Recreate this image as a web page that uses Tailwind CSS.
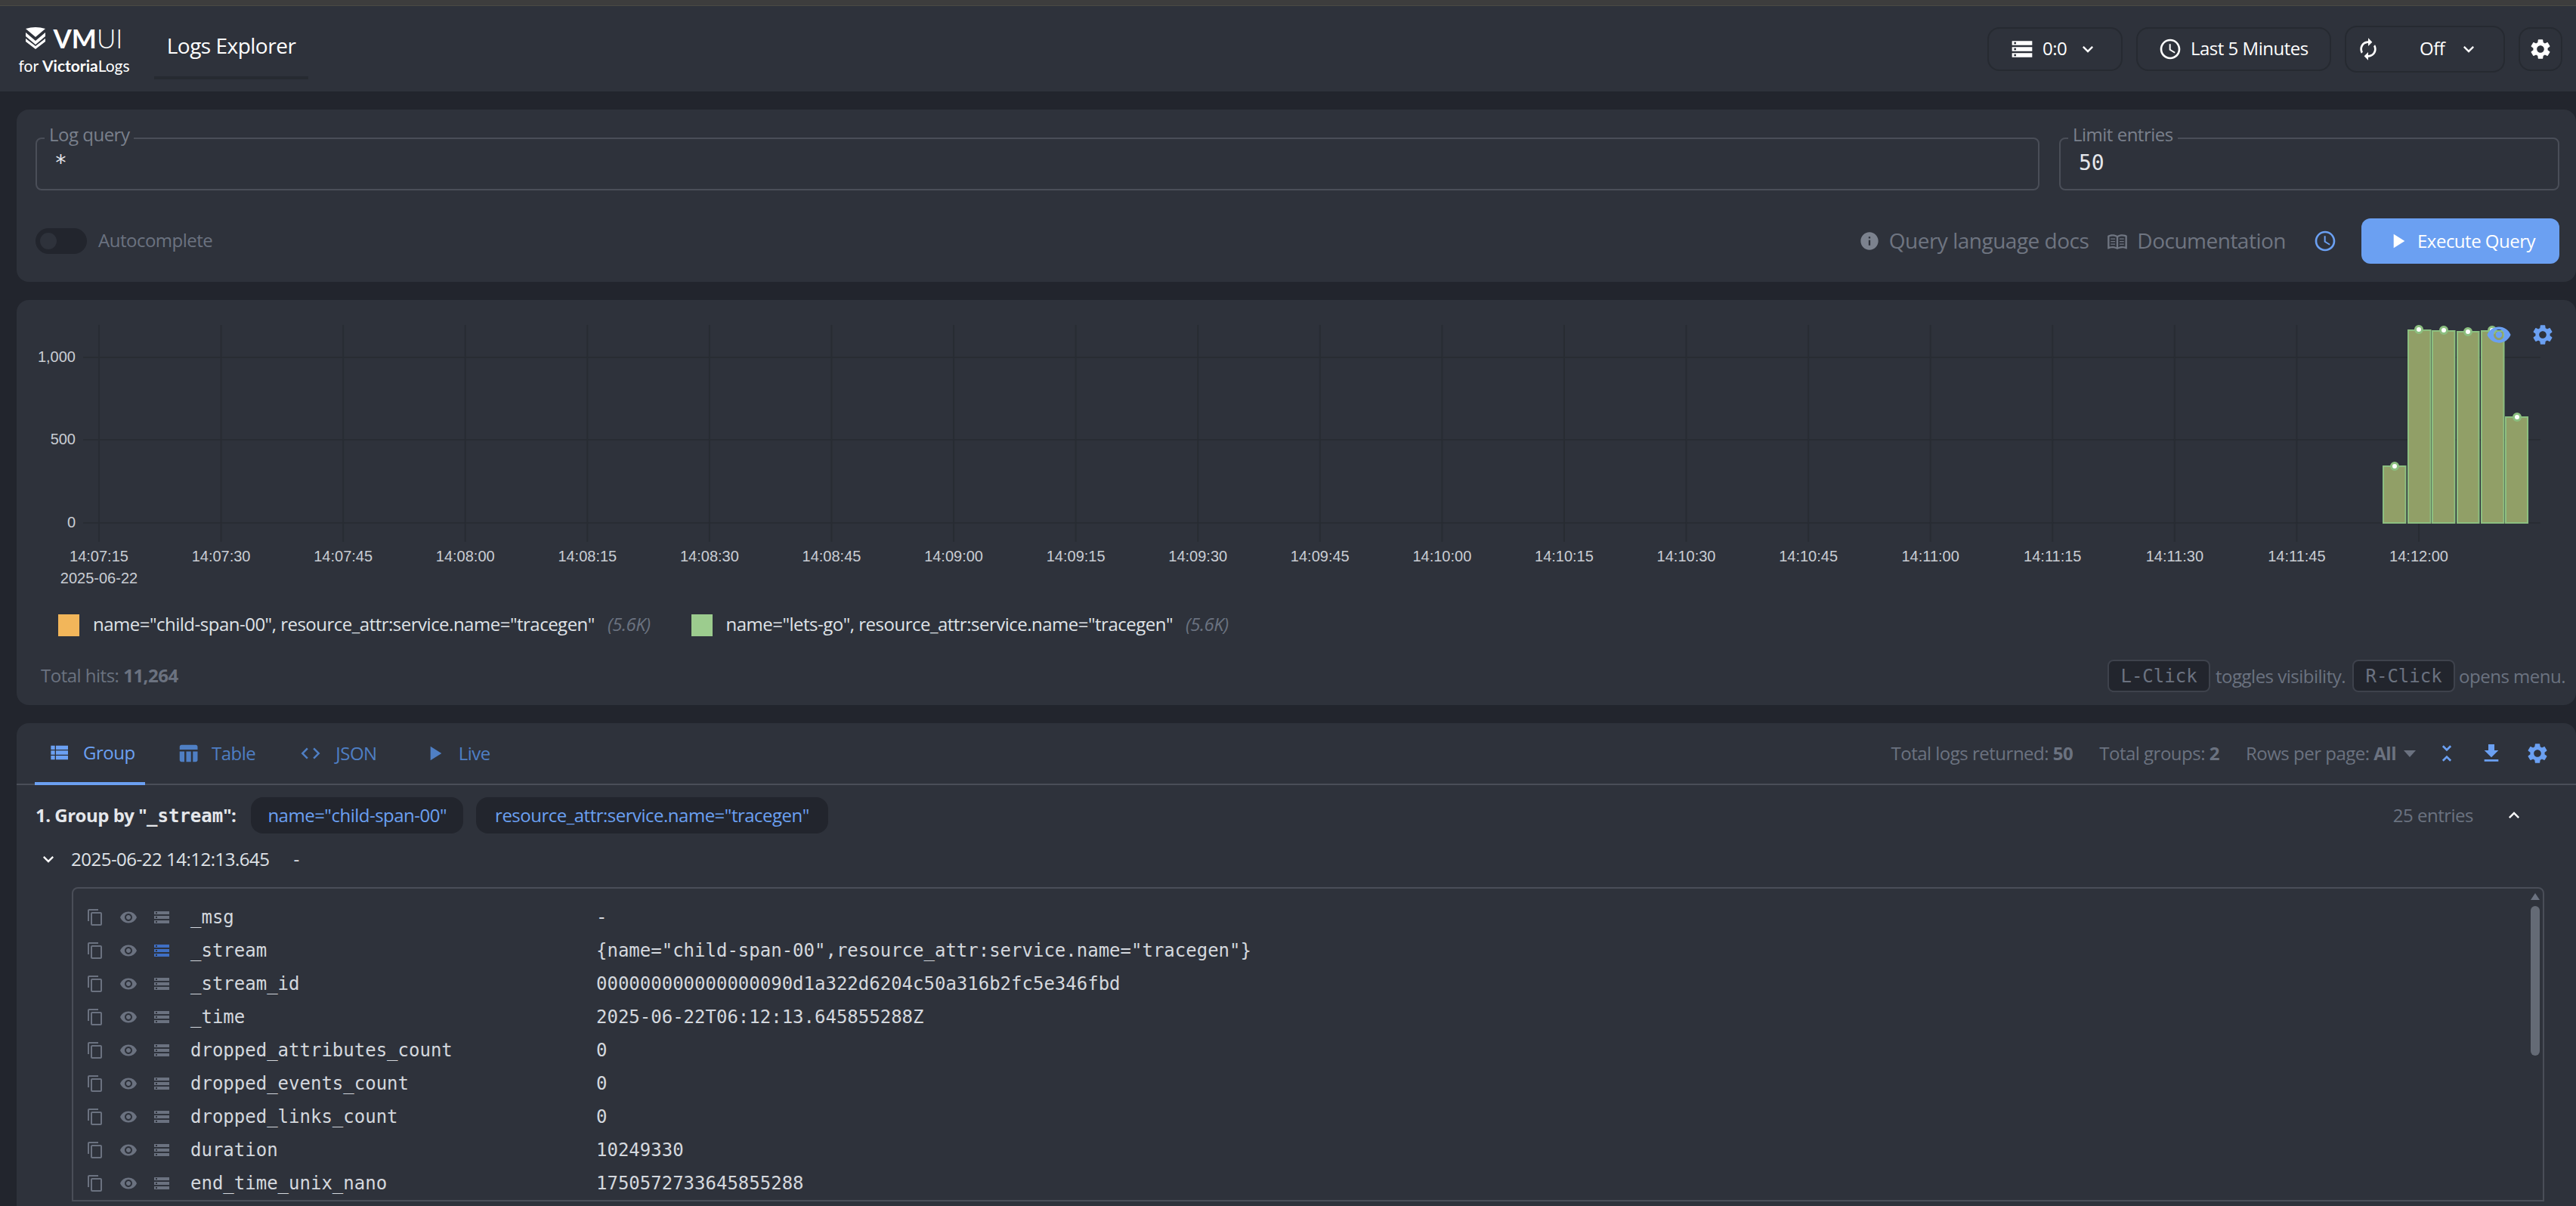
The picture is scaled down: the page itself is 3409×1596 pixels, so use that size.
<!DOCTYPE html>
<html lang="en">
<head>
  <meta charset="UTF-8" />
  <title>VMUI Logs Explorer</title>
  <script src="https://cdn.jsdelivr.net/npm/@tailwindcss/browser@4"></script>
</head>
<body class="bg-[#22252d] h-[1596px] overflow-hidden font-['Open_Sans',sans-serif] text-[24px] tracking-[-0.5px] text-white">
  <svg class="hidden">
    <symbol id="i-storage" viewBox="0 0 24 24"><path d="M2 20h20v-4H2v4zm2-3h2v2H4v-2zM2 4v4h20V4H2zm4 3H4V5h2v2zm-4 7h20v-4H2v4zm2-3h2v2H4v-2z"/></symbol>
    <symbol id="i-clock" viewBox="0 0 24 24"><path d="M11.99 2C6.47 2 2 6.48 2 12s4.47 10 9.99 10C17.52 22 22 17.52 22 12S17.52 2 11.99 2zM12 20c-4.42 0-8-3.58-8-8s3.58-8 8-8 8 3.58 8 8-3.58 8-8 8zm.5-13H11v6l5.25 3.15.75-1.23-4.5-2.67z"/></symbol>
    <symbol id="i-refresh" viewBox="0 0 24 24"><path d="M12 6v3l4-4-4-4v3c-4.42 0-8 3.58-8 8 0 1.57.46 3.03 1.24 4.26L6.7 14.8c-.45-.83-.7-1.79-.7-2.8 0-3.31 2.69-6 6-6zm6.76 1.74L17.3 9.2c.44.84.7 1.79.7 2.8 0 3.31-2.69 6-6 6v-3l-4 4 4 4v-3c4.42 0 8-3.58 8-8 0-1.57-.46-3.03-1.24-4.26z"/></symbol>
    <symbol id="i-gear" viewBox="0 0 24 24"><path d="M19.14 12.94c.04-.3.06-.61.06-.94 0-.32-.02-.64-.07-.94l2.03-1.58c.18-.14.23-.41.12-.61l-1.92-3.32c-.12-.22-.37-.29-.59-.22l-2.39.96c-.5-.38-1.03-.7-1.62-.94l-.36-2.54c-.04-.24-.24-.41-.48-.41h-3.84c-.24 0-.43.17-.47.41l-.36 2.54c-.59.24-1.13.57-1.62.94l-2.39-.96c-.22-.08-.47 0-.59.22L2.74 8.87c-.12.21-.08.47.12.61l2.03 1.58c-.05.3-.09.63-.09.94s.02.64.07.94l-2.03 1.58c-.18.14-.23.41-.12.61l1.92 3.32c.12.22.37.29.59.22l2.39-.96c.5.38 1.03.7 1.62.94l.36 2.54c.05.24.24.41.48.41h3.84c.24 0 .44-.17.47-.41l.36-2.54c.59-.24 1.13-.56 1.62-.94l2.39.96c.22.08.47 0 .59-.22l1.92-3.32c.12-.22.07-.47-.12-.61l-2.01-1.58zM12 15.6c-1.98 0-3.6-1.62-3.6-3.6s1.62-3.6 3.6-3.6 3.6 1.62 3.6 3.6-1.62 3.6-3.6 3.6z"/></symbol>
    <symbol id="i-down" viewBox="0 0 24 24"><path d="M7.41 8.59 12 13.17l4.59-4.58L18 10l-6 6-6-6 1.41-1.41z"/></symbol>
    <symbol id="i-up" viewBox="0 0 24 24"><path d="M7.41 15.41 12 10.83l4.59 4.58L18 14l-6-6-6 6 1.41 1.41z"/></symbol>
    <symbol id="i-info" viewBox="0 0 24 24"><path d="M12 2C6.48 2 2 6.48 2 12s4.48 10 10 10 10-4.48 10-10S17.52 2 12 2zm1 15h-2v-6h2v6zm0-8h-2V7h2v2z"/></symbol>
    <symbol id="i-book" viewBox="0 0 24 24"><path d="M21 5c-1.11-.35-2.33-.5-3.5-.5-1.95 0-4.05.4-5.5 1.5-1.45-1.1-3.55-1.5-5.5-1.5S2.45 4.9 1 6v14.65c0 .25.25.5.5.5.1 0 .15-.05.25-.05C3.1 20.45 5.05 20 6.5 20c1.95 0 4.05.4 5.5 1.5 1.35-.85 3.8-1.5 5.5-1.5 1.65 0 3.35.3 4.75 1.05.1.05.15.05.25.05.25 0 .5-.25.5-.5V6c-.6-.45-1.25-.75-2-1zM3 18.5V7c1.1-.35 2.3-.5 3.5-.5 1.34 0 3.13.41 4.5 .99v11.5c-1.37-.58-3.16-.99-4.5-.99-1.2 0-2.4.15-3.5.5zm18 0c-1.1-.35-2.3-.5-3.5-.5-1.34 0-3.13.41-4.5.99V7.49c1.37-.58 3.16-.99 4.5-.99 1.2 0 2.4.15 3.5.5v11.5z"/><path d="M4.5 9h5v1h-5zm0 3h5v1h-5zm0 3h5v1h-5zm10-6h5v1h-5zm0 3h5v1h-5zm0 3h5v1h-5z"/></symbol>
    <symbol id="i-play" viewBox="0 0 24 24"><path d="M8 5v14l11-7z"/></symbol>
    <symbol id="i-list" viewBox="0 0 24 24"><path d="M4 14h4v-4H4v4zm0 5h4v-4H4v4zM4 9h4V5H4v4zm5 5h12v-4H9v4zm0 5h12v-4H9v4zM9 5v4h12V5H9z"/></symbol>
    <symbol id="i-table" viewBox="0 0 24 24"><path d="M10 10.02h5V21h-5zM17 21h3c1.1 0 2-.9 2-2v-9h-5v11zm3-18H5c-1.1 0-2 .9-2 2v3h19V5c0-1.1-.9-2-2-2zM3 19c0 1.1.9 2 2 2h3V10H3v9z"/></symbol>
    <symbol id="i-code" viewBox="0 0 24 24"><path d="M9.4 16.6 4.8 12l4.6-4.6L8 6l-6 6 6 6 1.4-1.4zm5.2 0 4.6-4.6-4.6-4.6L16 6l6 6-6 6-1.4-1.4z"/></symbol>
    <symbol id="i-collapse" viewBox="0 0 24 24"><path d="M7.41 18.59 8.83 20 12 16.83 15.17 20l1.41-1.41L12 14l-4.59 4.59zm9.18-13.18L15.17 4 12 7.17 8.83 4 7.41 5.41 12 10l4.59-4.59z"/></symbol>
    <symbol id="i-download" viewBox="0 0 24 24"><path d="M19 9h-4V3H9v6H5l7 7 7-7zM5 18v2h14v-2H5z"/></symbol>
    <symbol id="i-copy" viewBox="0 0 24 24"><path d="M16 1H4c-1.1 0-2 .9-2 2v14h2V3h12V1zm3 4H8c-1.1 0-2 .9-2 2v14c0 1.1.9 2 2 2h11c1.1 0 2-.9 2-2V7c0-1.1-.9-2-2-2zm0 16H8V7h11v14z"/></symbol>
    <symbol id="i-eye" viewBox="0 0 24 24"><path d="M12 4.5C7 4.5 2.73 7.61 1 12c1.73 4.39 6 7.5 11 7.5s9.27-3.11 11-7.5c-1.73-4.39-6-7.5-11-7.5zM12 17c-2.76 0-5-2.24-5-5s2.24-5 5-5 5 2.24 5 5-2.24 5-5 5zm0-8c-1.66 0-3 1.34-3 3s1.34 3 3 3 3-1.34 3-3-1.34-3-3-3z"/></symbol>
  </svg>

  <!-- top strip -->
  <div class="h-[8px] bg-[#3d3d3d] border-b border-[#4a4a44]"></div>

  <!-- header -->
  <header class="h-[113px] bg-[#2e323b] flex items-center justify-between pl-[23px] pr-[18px]">
    <div class="flex items-center">
      <div class="w-[150px] flex flex-col items-center font-['Lato',sans-serif] tracking-normal">
        <div class="flex items-center gap-[10px] h-[36px]">
          <svg class="w-[27px] h-[30px] fill-white" viewBox="0 0 27 30">
            <path d="M0 3 Q13 -1 26 3 L13 14 Z"/>
            <path d="M0 8 L13 19 L26 8 V13 L13 24 L0 13 Z"/>
            <path d="M0 16 L13 26 L26 16 V20 L13 30 L0 20 Z"/>
          </svg>
          <span class="text-[35px] leading-none font-bold">VM<span class="font-light">UI</span></span>
        </div>
        <div class="text-[21px] leading-none mt-[8px] whitespace-nowrap">for <span class="font-bold">Victoria</span>Logs</div>
      </div>
      <div class="ml-[31px] w-[204px] h-[113px] pt-[31px] relative text-center text-[28px]">
        Logs Explorer
        <div class="absolute left-0 right-0 top-[93px] h-[4px] bg-[#262a31]"></div>
      </div>
    </div>
    <div class="flex items-center gap-[18px]">
      <div class="w-[179px] h-[58px] border-2 border-[#262a31] rounded-[16px] flex items-center pl-[28px]">
        <svg class="w-[32px] h-[32px] fill-white"><use href="#i-storage"/></svg>
        <span class="ml-[11px] -mt-[2px]">0:0</span>
        <svg class="w-[28px] h-[28px] fill-white ml-[14px]"><use href="#i-down"/></svg>
      </div>
      <div class="w-[258px] h-[58px] border-2 border-[#262a31] rounded-[16px] flex items-center pl-[27px]">
        <svg class="w-[32px] h-[32px] fill-white"><use href="#i-clock"/></svg>
        <span class="ml-[11px] -mt-[2px]">Last 5 Minutes</span>
      </div>
      <div class="w-[212px] h-[62px] border-2 border-[#262a31] rounded-[16px] flex items-center pl-[13px]">
        <svg class="w-[32px] h-[32px] fill-white"><use href="#i-refresh"/></svg>
        <span class="ml-[52px] -mt-[2px]">Off</span>
        <svg class="w-[28px] h-[28px] fill-white ml-[18px]"><use href="#i-down"/></svg>
      </div>
      <div class="w-[58px] h-[58px] border-2 border-[#262a31] rounded-[16px] flex items-center justify-center">
        <svg class="w-[32px] h-[32px] fill-white"><use href="#i-gear"/></svg>
      </div>
    </div>
  </header>

  <main class="pl-[22px] pt-[24px] flex flex-col gap-[24px]">
    <!-- query card -->
    <section class="h-[228px] bg-[#2e323b] rounded-[16px] pt-[37px] pl-[25px] pr-[22px]">
      <div class="flex gap-[26px]">
        <div class="relative flex-1 h-[70px] border-2 border-[#4a4e58] rounded-[8px]">
          <span class="absolute left-[10px] -top-[22px] px-[6px] bg-[#2e323b] text-[#7a808c] leading-[32px]">Log query</span>
          <span class="absolute left-[23px] top-[14px] font-['DejaVu_Sans_Mono',monospace] tracking-normal text-[28px] leading-[36px] text-[#e5e7eb]">*</span>
        </div>
        <div class="relative w-[662px] h-[70px] border-2 border-[#4a4e58] rounded-[8px]">
          <span class="absolute left-[10px] -top-[22px] px-[6px] bg-[#2e323b] text-[#7a808c] leading-[32px]">Limit entries</span>
          <span class="absolute left-[24px] top-[14px] font-['DejaVu_Sans_Mono',monospace] tracking-normal text-[28px] leading-[36px] text-[#e5e7eb]">50</span>
        </div>
      </div>
      <div class="flex items-center justify-between mt-[37px] h-[60px]">
        <div class="flex items-center">
          <div class="w-[68px] h-[34px] rounded-full bg-[#22252d] flex items-center pl-[6px]">
            <div class="w-[22px] h-[22px] rounded-full bg-[#2e323b]"></div>
          </div>
          <span class="ml-[15px] -mt-[2px] text-[#6b7280]">Autocomplete</span>
        </div>
        <div class="flex items-center">
          <svg class="w-[28px] h-[28px] fill-[#7c828e]"><use href="#i-info"/></svg>
          <span class="ml-[12px] -mt-[2px] text-[28px] text-[#6f7581]">Query language docs</span>
          <svg class="w-[28px] h-[28px] fill-[#6f7581] ml-[24px]"><use href="#i-book"/></svg>
          <span class="ml-[12px] -mt-[2px] text-[28px] text-[#6f7581]">Documentation</span>
          <svg class="w-[32px] h-[32px] fill-[#6ba0f2] ml-[36px]"><use href="#i-clock"/></svg>
          <button class="ml-[32px] w-[262px] h-[60px] rounded-[12px] bg-[#6ba0f2] flex items-center pl-[32px]">
            <svg class="w-[32px] h-[32px] fill-white"><use href="#i-play"/></svg>
            <span class="ml-[10px] -mt-[1px]">Execute Query</span>
          </button>
        </div>
      </div>
    </section>

    <!-- hits chart card -->
    <section class="h-[536px] bg-[#2e323b] rounded-[16px] relative">
      <svg id="chart" class="block w-[3387px] h-[385px] font-['Liberation_Sans',sans-serif] tracking-normal text-[20px] fill-[#c9cdd4]" viewBox="22 397 3387 385">
        <g id="grid" stroke="#282c33" stroke-width="2"></g>
        <text x="100" y="479" text-anchor="end">1,000</text>
        <text x="100" y="588" text-anchor="end">500</text>
        <text x="100" y="698" text-anchor="end">0</text>
        <g id="xlabels" text-anchor="middle"></g>
        <text x="131" y="772" text-anchor="middle">2025-06-22</text>
        <g fill="#919f67" stroke="#8cbf80" stroke-width="2">
          <rect x="3154" y="617" width="29.5" height="75"/>
          <rect x="3187" y="437" width="29.5" height="255"/>
          <rect x="3219" y="438" width="29.5" height="254"/>
          <rect x="3252" y="439" width="28.5" height="253"/>
          <rect x="3284" y="438" width="29.5" height="254"/>
          <rect x="3316" y="552" width="29" height="140"/>
        </g>
        <g fill="#ffffff" stroke="#8cbf80" stroke-width="3">
          <circle cx="3169" cy="617" r="4.5"/>
          <circle cx="3201" cy="436" r="4.5"/>
          <circle cx="3234" cy="437" r="4.5"/>
          <circle cx="3266" cy="439" r="4.5"/>
          <circle cx="3298" cy="437" r="4.5"/>
          <circle cx="3331" cy="552" r="4.5"/>
        </g>
      </svg>
      <svg class="absolute left-[3268px] top-[29px] w-[34px] h-[34px] fill-[#6ba0f2]"><use href="#i-eye"/></svg>
      <svg class="absolute left-[3327px] top-[30px] w-[32px] h-[32px] fill-[#6ba0f2]"><use href="#i-gear"/></svg>

      <div class="flex items-center h-[30px] mt-[29px] pl-[55px] text-[#dfe2e7]">
        <div class="w-[28px] h-[29px] mt-[3px] bg-[#f2b65a]"></div>
        <span class="ml-[18px]">name="child-span-00", resource_attr:service.name="tracegen"</span>
        <span class="ml-[17px] italic text-[#6b7280]">(5.6K)</span>
        <div class="ml-[55px] w-[28px] h-[29px] mt-[3px] bg-[#9ccc8e]"></div>
        <span class="ml-[17px]">name="lets-go", resource_attr:service.name="tracegen"</span>
        <span class="ml-[17px] italic text-[#6b7280]">(5.6K)</span>
      </div>

      <div class="flex items-center justify-between mt-[32px] pl-[32px] pr-[14px] text-[#6b7280]">
        <div class="-mt-[2px]">Total hits: <span class="font-bold">11,264</span></div>
        <div class="flex items-center">
          <kbd class="w-[136px] h-[43px] flex items-center justify-center bg-[#22252d] border-2 border-[#3e424c] rounded-[8px] font-['DejaVu_Sans_Mono',monospace] tracking-normal">L-Click</kbd>
          <span class="ml-[7px]">toggles visibility.</span>
          <kbd class="ml-[9px] w-[136px] h-[43px] flex items-center justify-center bg-[#22252d] border-2 border-[#3e424c] rounded-[8px] font-['DejaVu_Sans_Mono',monospace] tracking-normal">R-Click</kbd>
          <span class="ml-[5px]">opens menu.</span>
        </div>
      </div>
    </section>

    <!-- logs card -->
    <section class="h-[700px] bg-[#2e323b] rounded-t-[16px]">
      <div class="h-[82px] border-b-2 border-[#4a4e58] flex items-stretch justify-between pl-[24px] pr-[35px]">
        <div class="flex">
          <div class="w-[146px] border-b-4 border-[#6ba0f2] -mb-[2px] flex items-center pl-[16px] text-[#6ba0f2]">
            <svg class="w-[32px] h-[32px] fill-[#6ba0f2]"><use href="#i-list"/></svg>
            <span class="ml-[16px]">Group</span>
          </div>
          <div class="ml-[42px] flex items-center text-[#4f7fc4]">
            <svg class="w-[30px] h-[30px] fill-[#4f7fc4]"><use href="#i-table"/></svg>
            <span class="ml-[16px]">Table</span>
          </div>
          <div class="ml-[58px] flex items-center text-[#4f7fc4]">
            <svg class="w-[30px] h-[30px] fill-[#4f7fc4]"><use href="#i-code"/></svg>
            <span class="ml-[18px]">JSON</span>
          </div>
          <div class="ml-[60px] flex items-center text-[#4f7fc4]">
            <svg class="w-[32px] h-[32px] fill-[#4f7fc4]"><use href="#i-play"/></svg>
            <span class="ml-[16px]">Live</span>
          </div>
        </div>
        <div class="flex items-center text-[#6b7280]">
          <span>Total logs returned: <b>50</b></span>
          <span class="ml-[35px]">Total groups: <b>2</b></span>
          <span class="ml-[35px]">Rows per page: <b>All</b></span>
          <span class="ml-[10px] w-0 h-0 border-x-[8px] border-x-transparent border-t-[9px] border-t-[#6b7280]"></span>
          <svg class="w-[32px] h-[32px] fill-[#6ba0f2] ml-[25px]"><use href="#i-collapse"/></svg>
          <svg class="w-[32px] h-[32px] fill-[#6ba0f2] ml-[27px]"><use href="#i-download"/></svg>
          <svg class="w-[32px] h-[32px] fill-[#6ba0f2] ml-[29px]"><use href="#i-gear"/></svg>
        </div>
      </div>

      <div class="h-[48px] mt-[16px] flex items-center justify-between pl-[25px] pr-[68px]">
        <div class="flex items-center">
          <span class="font-bold text-[#e5e7eb]">1. Group by "<span class="font-['DejaVu_Sans_Mono',monospace] tracking-normal">_stream</span>":</span>
          <span class="ml-[20px] h-[48px] px-[22px] flex items-center rounded-[16px] bg-[#22252d] text-[#6ba0f2]">name="child-span-00"</span>
          <span class="ml-[17px] h-[48px] px-[25px] flex items-center rounded-[16px] bg-[#22252d] text-[#6ba0f2]">resource_attr:service.name="tracegen"</span>
        </div>
        <div class="flex items-center text-[#6b7280]">
          <span>25 entries</span>
          <svg class="w-[28px] h-[28px] fill-white ml-[40px]"><use href="#i-up"/></svg>
        </div>
      </div>

      <div class="h-[36px] mt-[16px] flex items-center pl-[28px] text-[#dfe2e7]">
        <svg class="w-[28px] h-[28px] fill-white"><use href="#i-down"/></svg>
        <span class="ml-[16px]">2025-06-22 14:12:13.645</span>
        <span class="ml-[32px]">-</span>
      </div>

      <div class="relative ml-[73px] mr-[42px] mt-[19px] border-2 border-[#4a4e58] rounded-t-[8px] pt-[16px] pl-[17px] font-['DejaVu_Sans_Mono',monospace] tracking-normal text-[#d4d8de]" id="rows">
        <div class="absolute right-[4px] top-[6px] w-0 h-0 border-x-[6px] border-x-transparent border-b-[9px] border-b-[#6b7280]"></div>
        <div class="absolute right-[4px] top-[23px] w-[12px] h-[198px] rounded-full bg-[#646a75]"></div>

        <div class="flex items-center h-[44px]"><svg class="w-[24px] h-[24px] fill-[#6b7280]"><use href="#i-copy"/></svg><svg class="w-[24px] h-[24px] fill-[#6b7280] ml-[20px]"><use href="#i-eye"/></svg><svg class="w-[24px] h-[24px] fill-[#6b7280] ml-[20px]"><use href="#i-storage"/></svg><span class="ml-[26px] w-[537px]">_msg</span><span>-</span></div>
        <div class="flex items-center h-[44px]"><svg class="w-[24px] h-[24px] fill-[#6b7280]"><use href="#i-copy"/></svg><svg class="w-[24px] h-[24px] fill-[#6b7280] ml-[20px]"><use href="#i-eye"/></svg><svg class="w-[24px] h-[24px] fill-[#3f6fc4] ml-[20px]"><use href="#i-storage"/></svg><span class="ml-[26px] w-[537px]">_stream</span><span>{name="child-span-00",resource_attr:service.name="tracegen"}</span></div>
        <div class="flex items-center h-[44px]"><svg class="w-[24px] h-[24px] fill-[#6b7280]"><use href="#i-copy"/></svg><svg class="w-[24px] h-[24px] fill-[#6b7280] ml-[20px]"><use href="#i-eye"/></svg><svg class="w-[24px] h-[24px] fill-[#6b7280] ml-[20px]"><use href="#i-storage"/></svg><span class="ml-[26px] w-[537px]">_stream_id</span><span>000000000000000090d1a322d6204c50a316b2fc5e346fbd</span></div>
        <div class="flex items-center h-[44px]"><svg class="w-[24px] h-[24px] fill-[#6b7280]"><use href="#i-copy"/></svg><svg class="w-[24px] h-[24px] fill-[#6b7280] ml-[20px]"><use href="#i-eye"/></svg><svg class="w-[24px] h-[24px] fill-[#6b7280] ml-[20px]"><use href="#i-storage"/></svg><span class="ml-[26px] w-[537px]">_time</span><span>2025-06-22T06:12:13.645855288Z</span></div>
        <div class="flex items-center h-[44px]"><svg class="w-[24px] h-[24px] fill-[#6b7280]"><use href="#i-copy"/></svg><svg class="w-[24px] h-[24px] fill-[#6b7280] ml-[20px]"><use href="#i-eye"/></svg><svg class="w-[24px] h-[24px] fill-[#6b7280] ml-[20px]"><use href="#i-storage"/></svg><span class="ml-[26px] w-[537px]">dropped_attributes_count</span><span>0</span></div>
        <div class="flex items-center h-[44px]"><svg class="w-[24px] h-[24px] fill-[#6b7280]"><use href="#i-copy"/></svg><svg class="w-[24px] h-[24px] fill-[#6b7280] ml-[20px]"><use href="#i-eye"/></svg><svg class="w-[24px] h-[24px] fill-[#6b7280] ml-[20px]"><use href="#i-storage"/></svg><span class="ml-[26px] w-[537px]">dropped_events_count</span><span>0</span></div>
        <div class="flex items-center h-[44px]"><svg class="w-[24px] h-[24px] fill-[#6b7280]"><use href="#i-copy"/></svg><svg class="w-[24px] h-[24px] fill-[#6b7280] ml-[20px]"><use href="#i-eye"/></svg><svg class="w-[24px] h-[24px] fill-[#6b7280] ml-[20px]"><use href="#i-storage"/></svg><span class="ml-[26px] w-[537px]">dropped_links_count</span><span>0</span></div>
        <div class="flex items-center h-[44px]"><svg class="w-[24px] h-[24px] fill-[#6b7280]"><use href="#i-copy"/></svg><svg class="w-[24px] h-[24px] fill-[#6b7280] ml-[20px]"><use href="#i-eye"/></svg><svg class="w-[24px] h-[24px] fill-[#6b7280] ml-[20px]"><use href="#i-storage"/></svg><span class="ml-[26px] w-[537px]">duration</span><span>10249330</span></div>
        <div class="flex items-center h-[44px]"><svg class="w-[24px] h-[24px] fill-[#6b7280]"><use href="#i-copy"/></svg><svg class="w-[24px] h-[24px] fill-[#6b7280] ml-[20px]"><use href="#i-eye"/></svg><svg class="w-[24px] h-[24px] fill-[#6b7280] ml-[20px]"><use href="#i-storage"/></svg><span class="ml-[26px] w-[537px]">end_time_unix_nano</span><span>1750572733645855288</span></div>
      </div>
    </section>
  </main>

  <script>
    const svgNs = "http://www.w3.org/2000/svg";
    const grid = document.getElementById("grid");
    const xlabels = document.getElementById("xlabels");

    // horizontal grid lines
    [473, 582, 692].forEach((y) => {
      const line = document.createElementNS(svgNs, "line");
      line.setAttribute("x1", 110);
      line.setAttribute("x2", 3362);
      line.setAttribute("y1", y);
      line.setAttribute("y2", y);
      grid.appendChild(line);
    });

    // one tick every 15s from 14:07:15
    for (let i = 0; i < 20; i++) {
      const x = 131 + i * 161.58;
      const line = document.createElementNS(svgNs, "line");
      line.setAttribute("x1", x);
      line.setAttribute("x2", x);
      line.setAttribute("y1", 430);
      line.setAttribute("y2", 717);
      grid.appendChild(line);

      const secs = 7 * 60 + 15 + i * 15;
      const label = document.createElementNS(svgNs, "text");
      label.setAttribute("x", x);
      label.setAttribute("y", 743);
      label.textContent = "14:" + String(Math.floor(secs / 60)).padStart(2, "0") + ":" + String(secs % 60).padStart(2, "0");
      xlabels.appendChild(label);
    }
  </script>
</body>
</html>
